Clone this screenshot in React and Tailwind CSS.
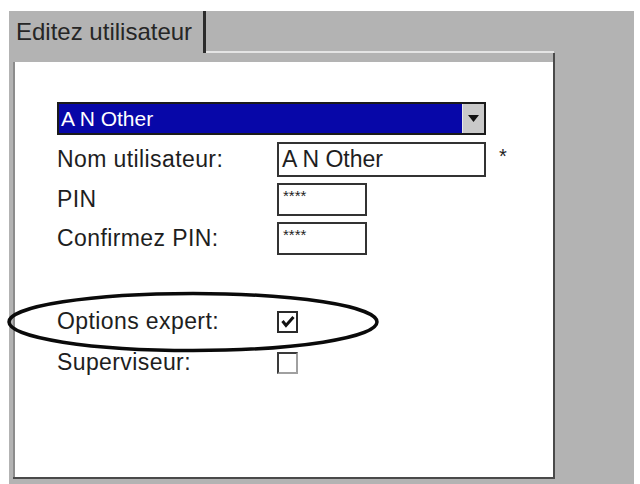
import React from 'react';

const Field = ({ label, children }) => (
  <div className="flex items-center">
    <span className="w-[220px] shrink-0 tracking-[0.4px]">{label}</span>
    {children}
  </div>
);

const Checkbox = ({ checked }) => (
  <div
    className={
      checked
        ? 'w-[21px] h-[22px] border-2 border-[#2a2a2a] bg-white flex items-center justify-center'
        : 'w-[21px] h-[22px] border-2 border-t-[#3a3a3a] border-l-[#3a3a3a] border-r-[#a0a0a0] border-b-[#a0a0a0] bg-white'
    }
  >
    {checked && (
      <svg width="14" height="13" viewBox="0 0 14 13">
        <path d="M1.5 6 L5 10.5 L12.5 2" fill="none" stroke="#111" strokeWidth="3" />
      </svg>
    )}
  </div>
);

export default function App() {
  return (
    <div className="relative w-[640px] h-[484px] bg-white overflow-hidden text-[#1e1e1e]" style={{ fontFamily: '"Liberation Sans", Arial, sans-serif' }}>
      <div className="ml-[9px] pt-[11px]">
        <div className="w-[625px] h-[473px] bg-[#b3b3b3] flex flex-col">
          {/* Tab header */}
          <div className="flex h-[42px] shrink-0">
            <div className="w-[197px] border-r-[3px] border-[#2b2b2b] pl-[7px] flex items-center text-[24px] leading-none text-[#262626]">
              Editez utilisateur
            </div>
            <div className="w-[348px] border-b-2 border-[#e4e4e4]" />
          </div>

          {/* Panel */}
          <div className="ml-[4px] w-[542px] h-[426px] flex flex-col border-r-2 border-b-2 border-[#4a4a4a]">
            <div className="h-[9px] shrink-0" />
            <div className="flex-1 bg-white border-l-2 border-[#8c8c8c] pl-[42px] pt-[40px] text-[23px] leading-none">
              {/* Dropdown */}
              <div className="w-[429px] h-[33px] border-2 border-[#1a1a1a] bg-[#0707a8] flex items-center">
                <span className="flex-1 pl-[2px] text-white text-[21px]">A N Other</span>
                <div className="w-[22px] h-full bg-[#c9c9c9] border-l border-[#e8e8e8] flex items-center justify-center">
                  <svg width="11" height="7" viewBox="0 0 11 7">
                    <path d="M0 0 H11 L5.5 7 Z" fill="#111" />
                  </svg>
                </div>
              </div>

              <div className="mt-[7px] flex flex-col gap-[6px]">
                <Field label="Nom utilisateur:">
                  <div className="w-[209px] h-[35px] border-2 border-[#333] flex items-center pl-[3px]">A N Other</div>
                  <span className="ml-[13px] self-start mt-[4px] text-[20px]">*</span>
                </Field>
                <Field label="PIN">
                  <div className="w-[90px] h-[33px] border-2 border-[#333] pl-[4px] pt-[3px] text-[15px] leading-none">****</div>
                </Field>
                <Field label="Confirmez PIN:">
                  <div className="w-[90px] h-[33px] border-2 border-[#333] pl-[4px] pt-[3px] text-[15px] leading-none">****</div>
                </Field>
              </div>

              <div className="mt-[55px] flex flex-col gap-[18px]">
                <Field label="Options expert:">
                  <Checkbox checked />
                </Field>
                <Field label="Superviseur:">
                  <Checkbox />
                </Field>
              </div>
            </div>
          </div>
        </div>
      </div>

      {/* Annotation ellipse */}
      <svg className="absolute left-[5px] top-[290px]" width="376" height="64" viewBox="0 0 376 64">
        <ellipse cx="188" cy="32" rx="184" ry="28.5" fill="none" stroke="#0a0a0a" strokeWidth="3.5" />
      </svg>
    </div>
  );
}
